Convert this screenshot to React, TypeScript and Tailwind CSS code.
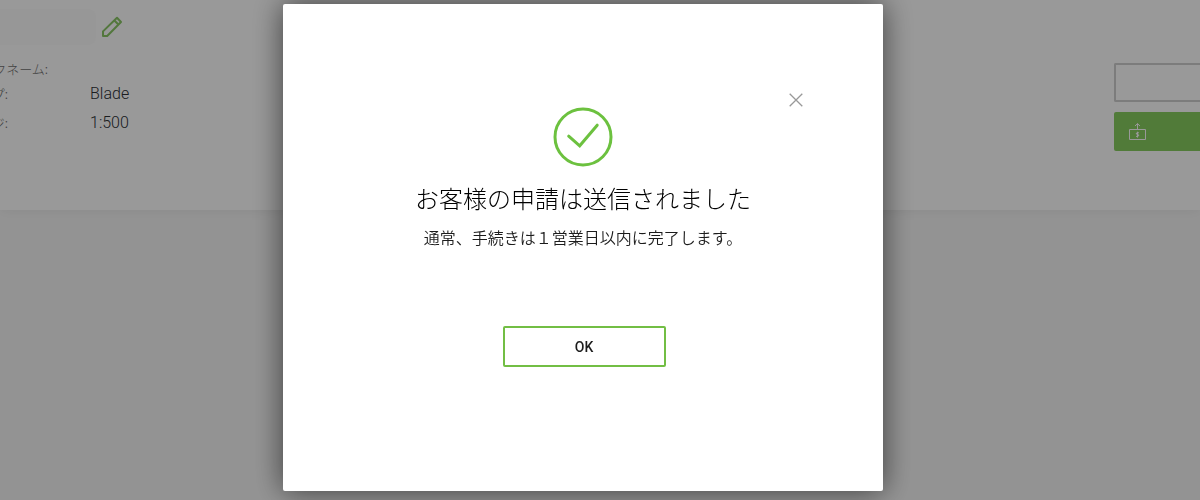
import React from 'react';

type Detail = { label: string; value: string; labelWidth: string; row: string };

const details: Detail[] = [
  { label: 'クネーム:', value: '', labelWidth: 'w-12', row: 'h-5' },
  { label: 'プ:', value: 'Blade', labelWidth: 'w-2', row: 'h-[29px]' },
  { label: 'ジ:', value: '1:500', labelWidth: 'w-2', row: 'h-[29px]' },
];

function PencilIcon() {
  return (
    <svg className="size-[22px]" viewBox="0 0 22 22" fill="none" stroke="#8ac766" strokeWidth="2" strokeLinejoin="round" aria-hidden="true">
      <path d="M2 20V15.4L16 1.8L20 6L6.2 20Z" />
      <path d="M13.4 4.5L17.4 8.5" />
    </svg>
  );
}

function WithdrawIcon() {
  return (
    <svg className="h-[17px] w-[17px]" viewBox="0 0 17 17" fill="none" stroke="#ffffff" strokeWidth="1" aria-hidden="true">
      <path d="M.5 6.5H16.5V16.5H.5Z" />
      <path d="M8.5 6V.5M6 3L8.5.6L11 3" />
      <path d="M10 10Q8.5 8.8 7.5 10T8.5 11.4T9.5 13T7 13.2M8.5 8.8V14.5" />
    </svg>
  );
}

function SuccessIcon() {
  return (
    <svg className="size-[60px]" viewBox="0 0 60 60" fill="none" stroke="#6cc13f" strokeWidth="3" aria-hidden="true">
      <circle cx="30" cy="30" r="28" />
      <path d="M15.7 29.2L26.7 38.8L44.2 18.2" strokeLinecap="round" />
    </svg>
  );
}

function AccountPage() {
  return (
    <div className="min-h-screen bg-[#f6f6f6]">
      <section className="flex justify-between bg-white pb-[59px] shadow-[0_1px_12px_rgba(0,0,0,0.06)]">
        <div className="pt-[9px]">
          <div className="flex h-9 items-center gap-[5px]">
            <div className="h-9 w-24 rounded-r-lg bg-[#fcfcfc]" />
            <button type="button" aria-label="編集">
              <PencilIcon />
            </button>
          </div>
          <dl className="pt-3.5">
            {details.map((d) => (
              <div key={d.label} className={`flex items-center ${d.row} text-[#2d3136]`}>
                <dt className="w-[90px] text-[13px] font-light text-[#6e6e6e]">
                  <span className={`flex justify-end whitespace-nowrap ${d.labelWidth}`}>{d.label}</span>
                </dt>
                <dd className="font-['Roboto',sans-serif] text-base font-light">{d.value}</dd>
              </div>
            ))}
          </dl>
        </div>
        <div className="flex w-[86px] flex-col gap-2.5 pt-[63px]">
          <button type="button" aria-label="入金" className="h-[39px] rounded-l-xs border-2 border-r-0 border-[#cfcfcf]" />
          <button type="button" aria-label="出金" className="flex h-[39px] items-center rounded-l-xs bg-[#88cd60] pl-[15px]">
            <WithdrawIcon />
          </button>
        </div>
      </section>
    </div>
  );
}

function SuccessDialog() {
  return (
    <div className="fixed inset-0 flex justify-center bg-black/40 pt-1 pr-[34px] pb-[9px]">
      <div
        role="dialog"
        aria-modal="true"
        aria-labelledby="dialog-title"
        className="flex w-[600px] flex-col items-center rounded-xs bg-white text-[#1c1c1c] shadow-[0_0_30px_rgba(0,0,0,0.6)]"
      >
        <div className="flex w-full justify-end pt-[89px] pr-20">
          <button type="button" aria-label="閉じる" className="h-[14px]">
            <svg className="size-[14px]" viewBox="0 0 14 14" stroke="#999" strokeWidth="1.3" aria-hidden="true">
              <path d="M.7.7L13.3 13.3M13.3.7L.7 13.3" />
            </svg>
          </button>
        </div>
        <SuccessIcon />
        <h1 id="dialog-title" className="mt-[13px] text-2xl leading-9 font-light text-black">
          お客様の申請は送信されました
        </h1>
        <p className="mt-[9px] text-base font-[350]">通常、手続きは１営業日以内に完了します。</p>
        <button
          type="button"
          className="mt-[77px] ml-0.5 h-[41px] w-[163px] rounded-xs border-2 border-[#72be44] font-['Roboto',sans-serif] text-sm font-medium"
        >
          OK
        </button>
      </div>
    </div>
  );
}

export default function App() {
  return (
    <div className="overflow-hidden font-['Noto_Sans_CJK_JP',sans-serif]">
      <AccountPage />
      <SuccessDialog />
    </div>
  );
}
